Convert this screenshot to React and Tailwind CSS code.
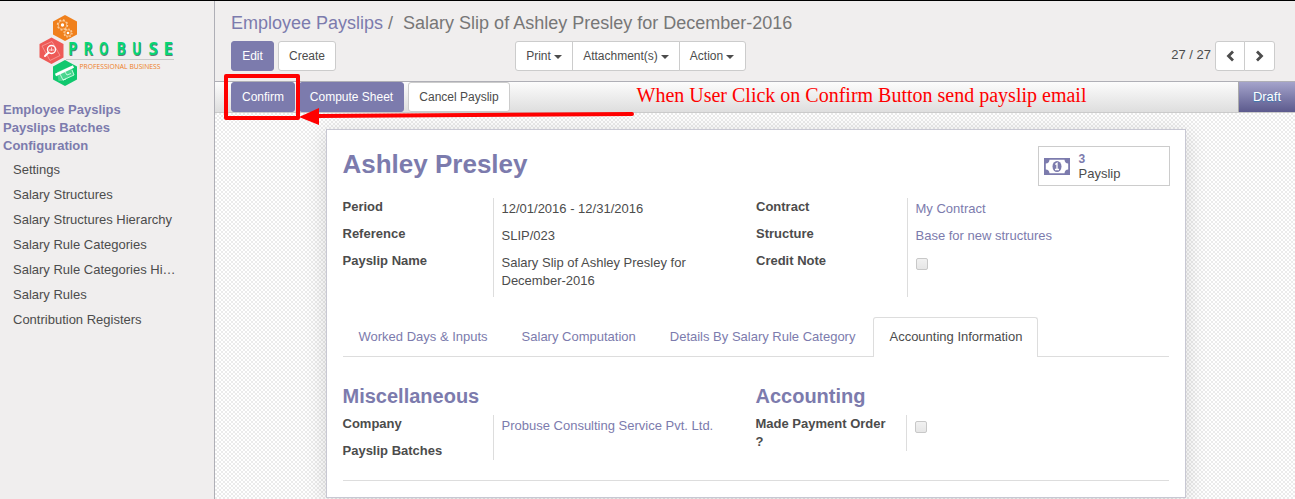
import React from "react";

const menu = [
  "Settings",
  "Salary Structures",
  "Salary Structures Hierarchy",
  "Salary Rule Categories",
  "Salary Rule Categories Hi…",
  "Salary Rules",
  "Contribution Registers",
];

const brand = [
  ["P", 38],
  ["R", 53.5],
  ["O", 69],
  ["B", 86.5],
  ["U", 102],
  ["S", 118.5],
  ["E", 133.5],
];

function Logo() {
  return (
    <svg width="145" height="76" viewBox="0 0 145 76" className="block">
      <polygon points="35,0 47,6.5 47,19.5 35,26 23,19.5 23,6.5" fill="#f0801c" />
      <polygon points="21.5,22.500 33.500,29 33.500,42.500 21.500,49 9.500,42.500 9.500,29" fill="#ee5a57" />
      <polygon points="35,45 47,51.5 47,64.5 35,71 23,64.5 23,51.5" fill="#10c86e" />
      <g fill="none" stroke="#fbd0a2">
        <circle cx="32.5" cy="10" r="5" strokeWidth="1.4" strokeDasharray="1.900 2" />
        <circle cx="32.5" cy="10" r="4.1" strokeWidth="0.700" />
        <circle cx="38" cy="18" r="4" strokeWidth="1.2" strokeDasharray="1.600 1.500" />
        <circle cx="38" cy="18" r="3.2" strokeWidth="0.700" />
      </g>
      <circle cx="32.5" cy="10" r="1.7" fill="#fff" />
      <circle cx="38" cy="18" r="1.3" fill="#fff" />
      <path d="M12 31l10-4.500 8 14-10 5z" fill="none" stroke="#f6a19f" strokeWidth="0.8" />
      <circle cx="21.5" cy="34.5" r="4" fill="#ee5a57" stroke="#fff" strokeWidth="1.4" />
      <path d="M18.500 37.500l-3.500 3.500" stroke="#fff" strokeWidth="2" strokeLinecap="round" />
      <path d="M20 36v-2M21.500 36v-3.500M23 36v-2" stroke="#fff" strokeWidth="0.7" />
      <path d="M27 57l14-6 3.500 9-12 6-4 0z" fill="#4bd58f" />
      <path d="M30 59l3 6 3-1M35 57l2 3 4-1.500M42 55l2 5-11 5" stroke="#e2fff0" strokeWidth="0.8" fill="none" />
      <path d="M25.500 60l18-8.500" stroke="#fff" strokeWidth="2.6" />
      <g fontFamily="Open Sans, sans-serif" fontWeight="700" fontSize="18.500">
        {brand.map(([c, x]) => (
          <g key={c}>
            <text x={x + 0.5} y="41" textLength="9.500" lengthAdjust="spacingAndGlyphs" fill="#6c7671">{c}</text>
            <text x={x} y="39.800" textLength="9.500" lengthAdjust="spacingAndGlyphs" fill="#08d675">{c}</text>
          </g>
        ))}
      </g>
      <path d="M36 44.500h108" stroke="#c9c9c9" />
      <text x="49.500" y="54" textLength="81" lengthAdjust="spacingAndGlyphs" fontFamily="Open Sans, sans-serif" fontSize="8" fill="#ee7d1d">PROFESSIONAL BUSINESS</text>
    </svg>
  );
}

function Caret() {
  return (
    <svg width="8" height="4" viewBox="0 0 8 4" className="ml-[3px] mt-0.5">
      <path d="M0 0h8L4 4z" fill="#4c4c4c" />
    </svg>
  );
}

function Button({ primary, className, children }) {
  return (
    <button
      className={
        "flex h-[30px] shrink-0 items-center justify-center rounded-[3px] border text-[12px] leading-[18px] " +
        (primary ? "border-[#7c7bad] bg-[#7c7bad] text-white " : "border-[#cccccc] bg-white text-[#4c4c4c] ") +
        className
      }
    >
      {children}
    </button>
  );
}

function Check() {
  return (
    <span className="ml-[0.5px] mt-1 block size-3 rounded-[2px] border border-[#c8c8c8] bg-linear-to-b from-[#f1f1f1] to-[#e6e6e6]" />
  );
}

function Group({ labels, height, labelWidth, children }) {
  return (
    <div className="flex">
      <div className={"shrink-0 font-bold " + labelWidth}>
        {labels.map((l) => (
          <div key={l} className="mb-[9px]">{l}</div>
        ))}
      </div>
      <div className={"flex flex-col gap-[9px] border-l border-[#dddddd] pl-[7.5px] pt-0.5 " + height}>{children}</div>
    </div>
  );
}

export default function App() {
  return (
    <div className="relative flex h-[499px] w-[1295px] flex-col overflow-hidden border-t border-black bg-[#f0eeee] font-['Liberation_Sans',Arial,sans-serif] text-[13px] leading-[18px] text-[#4c4c4c]">
      <div className="flex flex-1">
        <aside className="w-[215px] shrink-0 border-r border-[#afafb6]">
          <div className="h-[100px] pl-[30px] pt-[14px]">
            <Logo />
          </div>
          <nav className="pl-[3px] font-bold text-[#7c7bad]">
            <div>Employee Payslips</div>
            <div>Payslips Batches</div>
            <div>Configuration</div>
          </nav>
          <ul className="flex flex-col gap-[7px] pl-[13px] pt-1.5">
            {menu.map((m) => (
              <li key={m}>{m}</li>
            ))}
          </ul>
        </aside>

        <main className="flex w-[1080px] flex-col">
          <header className="h-[81px] border-b border-[#afafb6] pl-4 pr-5">
            <div className="flex h-10 items-center whitespace-pre pt-1 text-[18px] leading-6 text-[#777777]">
              <span className="text-[#7c7bad]">Employee Payslips</span>
              <span>{" /  Salary Slip of Ashley Presley for December-2016"}</span>
            </div>
            <div className="flex items-center">
              <div className="flex w-[284px] gap-1">
                <Button primary className="w-[43px]">Edit</Button>
                <Button className="w-[58px]">Create</Button>
              </div>
              <div className="flex">
                <Button className="w-[58px] rounded-r-none">Print<Caret /></Button>
                <Button className="-ml-px w-[108px] rounded-none">Attachment(s)<Caret /></Button>
                <Button className="-ml-px w-[67px] rounded-l-none pr-px">Action<Caret /></Button>
              </div>
              <div className="ml-auto flex items-center">
                <span className="mr-1 pb-0.5">27 / 27</span>
                <Button className="w-[30px] rounded-r-none">
                  <svg width="10" height="12" viewBox="0 0 10 12"><path d="M8 1.500L3.500 6l4.500 4.500" fill="none" stroke="#4c4c4c" strokeWidth="2.8" /></svg>
                </Button>
                <Button className="-ml-px w-[31px] rounded-l-none">
                  <svg width="10" height="12" viewBox="0 0 10 12"><path d="M2 1.500L6.500 6 2 10.500" fill="none" stroke="#4c4c4c" strokeWidth="2.8" /></svg>
                </Button>
              </div>
            </div>
          </header>

          <div className="flex h-[31px] justify-between border-b border-[#cacaca] bg-linear-to-b from-[#fcfcfc] to-[#dedede] pl-4">
            <div className="flex gap-1">
              <Button primary className="w-16">Confirm</Button>
              <Button primary className="w-[105px]">Compute Sheet</Button>
              <Button className="w-[102px]">Cancel Payslip</Button>
            </div>
            <div className="flex w-[57px] items-center justify-center border-l border-[#aaaaaa] bg-linear-to-b from-[#a5a4cb] to-[#5c5a8d] text-white [text-shadow:0_1px_1px_#3a78b0]">
              Draft
            </div>
          </div>

          <div className="flex-1 bg-[conic-gradient(#fff_25%,#ebebeb_0_50%,#fff_0_75%,#ebebeb_0)] bg-size-[4px_4px] pl-[111px] pt-4">
            <section className="h-[369px] w-[860px] border border-[#c8c8d3] bg-white pl-[15.5px] pr-4 shadow-[0_4px_20px_rgba(0,0,0,0.15)]">
              <div className="flex h-[68px] justify-between pt-4">
                <h1 className="pt-[3px] text-[26px] font-bold leading-[30px] text-[#7c7bad]">Ashley Presley</h1>
                <div className="-mr-px flex h-10 w-[132px] items-center border border-[#cccccc] pl-[5px]">
                  <svg width="26" height="17" viewBox="0 0 26 17">
                    <path fillRule="evenodd" fill="#7c7bad" d="M0 0h26v17H0zM5.500 1.800A4 4 0 0 1 1.800 5.500v6a4 4 0 0 1 3.700 3.700h15a4 4 0 0 1 3.700-3.700v-6a4 4 0 0 1-3.700-3.700z" />
                    <ellipse cx="13" cy="8.5" rx="4.5" ry="5.5" fill="#7c7bad" />
                    <path d="M11.300 6.500l1.700-1.300v6M11 11.500h4" fill="none" stroke="#fff" strokeWidth="1.300" />
                  </svg>
                  <div className="ml-[8.5px] leading-[15px]">
                    <div className="pt-px text-[12px] font-bold leading-[14px] text-[#7c7bad]">3</div>
                    <div>Payslip</div>
                  </div>
                </div>
              </div>

              <div className="flex h-[119px]">
                <div className="w-[413.5px]">
                  <Group labels={["Period", "Reference", "Payslip Name"]} labelWidth="w-[150.5px]" height="h-[99px]">
                    <div>12/01/2016 - 12/31/2016</div>
                    <div>SLIP/023</div>
                    <div className="w-[210px]">Salary Slip of Ashley Presley for December-2016</div>
                  </Group>
                </div>
                <Group labels={["Contract", "Structure", "Credit Note"]} labelWidth="w-[151px]" height="h-[99px]">
                  <div className="text-[#7c7bad]">My Contract</div>
                  <div className="text-[#7c7bad]">Base for new structures</div>
                  <Check />
                </Group>
              </div>

              <div className="flex h-10 gap-0.5 border-b border-[#dddddd] text-[#7c7bad]">
                <div className="px-4 pt-[11px]">Worked Days &amp; Inputs</div>
                <div className="px-4 pt-[11px]">Salary Computation</div>
                <div className="px-4 pt-[11px]">Details By Salary Rule Category</div>
                <div className="h-10 rounded-t-[3px] border border-b-0 border-[#dddddd] bg-white px-[15px] pt-[10px] text-[#4c4c4c]">
                  Accounting Information
                </div>
              </div>

              <div className="flex h-[124px] border-b border-[#dddddd] pt-7">
                <div className="w-[413px]">
                  <h2 className="h-[30px] text-[20px] font-bold leading-[23px] text-[#7c7bad]">Miscellaneous</h2>
                  <Group labels={["Company", "Payslip Batches"]} labelWidth="w-[150.5px]" height="h-[45px]">
                    <div className="text-[#7c7bad]">Probuse Consulting Service Pvt. Ltd.</div>
                  </Group>
                </div>
                <div>
                  <h2 className="h-[30px] text-[20px] font-bold leading-[23px] text-[#7c7bad]">Accounting</h2>
                  <Group labels={["Made Payment Order ?"]} labelWidth="w-[150.5px] pr-[15px]" height="h-9">
                    <Check />
                  </Group>
                </div>
              </div>
            </section>
          </div>
        </main>
      </div>

      <div className="absolute left-[224px] top-[73px] h-[46px] w-[76px] rounded-[2px] border-4 border-[#ff0000]" />
      <svg className="absolute left-[299px] top-[106px]" width="340" height="20" viewBox="0 0 340 20">
        <path d="M18 9L333 7" stroke="#ff0000" strokeWidth="4" strokeLinecap="round" />
        <path d="M0 10L20 1v17z" fill="#ff0000" />
      </svg>
      <div className="absolute left-[636.5px] top-[83px] whitespace-nowrap font-['Liberation_Serif',serif] text-[20px] leading-[23px] text-[#ff0000]">
        When User Click on Confirm Button send payslip email
      </div>
    </div>
  );
}
